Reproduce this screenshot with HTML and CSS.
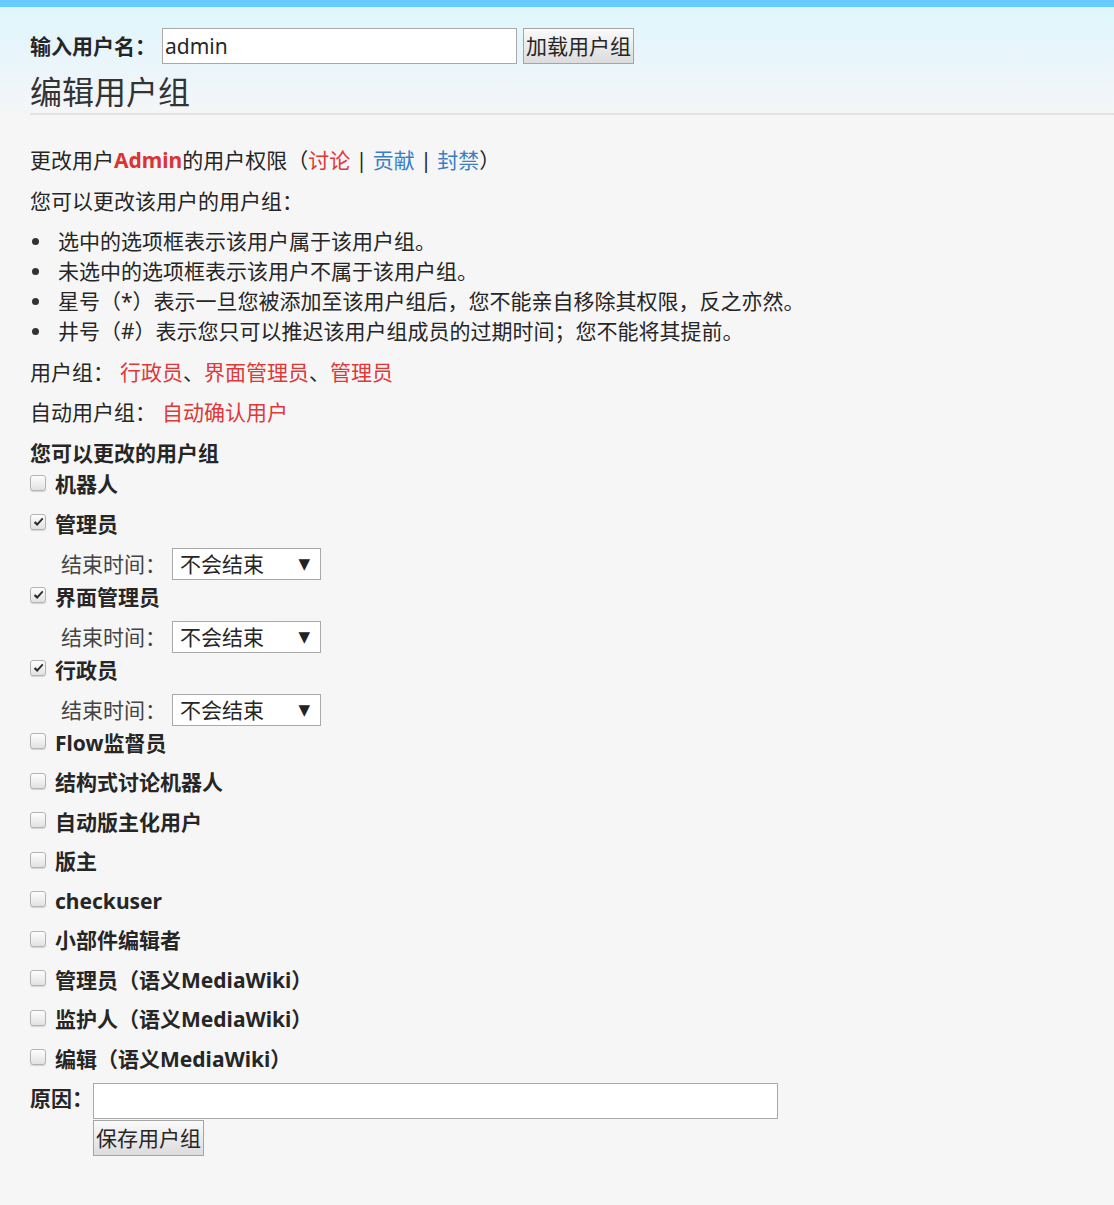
FILE: index.html
```html
<!DOCTYPE html>
<html lang="zh-CN">
<head>
<meta charset="utf-8">
<title>编辑用户组</title>
<link rel="stylesheet" href="styles.css">
</head>
<body>
<div class="topbar"></div>
<div class="page">
  <form class="loadform">
    <label class="loadlabel">输入用户名：</label>
    <input class="userbox" type="text" value="admin">
    <button type="button" class="btn load-btn">加载用户组</button>
  </form>
  <h1 class="title">编辑用户组</h1>

  <p class="rights">更改用户<b class="uname">Admin</b>的用户权限（<a class="red">讨论</a> | <a class="blue">贡献</a> | <a class="blue">封禁</a>）</p>
  <p class="can">您可以更改该用户的用户组：</p>
  <ul class="notes">
    <li>选中的选项框表示该用户属于该用户组。</li>
    <li>未选中的选项框表示该用户不属于该用户组。</li>
    <li>星号（*）表示一旦您被添加至该用户组后，您不能亲自移除其权限，反之亦然。</li>
    <li>井号（#）表示您只可以推迟该用户组成员的过期时间；您不能将其提前。</li>
  </ul>
  <p class="groups">用户组：<span class="gap"></span><a class="red">行政员</a>、<a class="red">界面管理员</a>、<a class="red">管理员</a></p>
  <p class="auto">自动用户组：<span class="gap"></span><a class="red">自动确认用户</a></p>
  <h3 class="changeable">您可以更改的用户组</h3>

  <div class="grouplist">
    <div class="row"><span class="cb"></span><span class="glabel">机器人</span></div>
    <div class="row"><span class="cb"><svg class="tick" viewBox="0 0 12 11" width="11" height="10"><path d="M0.8 6.2 L2.6 4.6 L4.6 6.6 L10 0.8 L11.4 2.2 L4.6 10 Z"/></svg></span><span class="glabel">管理员</span></div>
    <div class="expiry"><span class="elabel">结束时间：</span><span class="sel"><span>不会结束</span><span class="arrow">▼</span></span></div>
    <div class="row"><span class="cb"><svg class="tick" viewBox="0 0 12 11" width="11" height="10"><path d="M0.8 6.2 L2.6 4.6 L4.6 6.6 L10 0.8 L11.4 2.2 L4.6 10 Z"/></svg></span><span class="glabel">界面管理员</span></div>
    <div class="expiry"><span class="elabel">结束时间：</span><span class="sel"><span>不会结束</span><span class="arrow">▼</span></span></div>
    <div class="row"><span class="cb"><svg class="tick" viewBox="0 0 12 11" width="11" height="10"><path d="M0.8 6.2 L2.6 4.6 L4.6 6.6 L10 0.8 L11.4 2.2 L4.6 10 Z"/></svg></span><span class="glabel">行政员</span></div>
    <div class="expiry"><span class="elabel">结束时间：</span><span class="sel"><span>不会结束</span><span class="arrow">▼</span></span></div>
    <div class="row"><span class="cb"></span><span class="glabel">Flow监督员</span></div>
    <div class="row"><span class="cb"></span><span class="glabel">结构式讨论机器人</span></div>
    <div class="row"><span class="cb"></span><span class="glabel">自动版主化用户</span></div>
    <div class="row"><span class="cb"></span><span class="glabel">版主</span></div>
    <div class="row"><span class="cb"></span><span class="glabel">checkuser</span></div>
    <div class="row"><span class="cb"></span><span class="glabel">小部件编辑者</span></div>
    <div class="row"><span class="cb"></span><span class="glabel">管理员（语义MediaWiki）</span></div>
    <div class="row"><span class="cb"></span><span class="glabel">监护人（语义MediaWiki）</span></div>
    <div class="row"><span class="cb"></span><span class="glabel">编辑（语义MediaWiki）</span></div>
  </div>

  <div class="reason">
    <label class="rlabel">原因：</label>
    <div class="rfields">
      <input class="reasonbox" type="text">
      <button type="button" class="btn save-btn">保存用户组</button>
    </div>
  </div>
</div>
</body>
</html>
```

FILE: styles.css
```css
html, body {
  margin: 0;
  padding: 0;
}
body {
  background: #f6f6f6;
  font-family: "Noto Sans", "Noto Sans CJK SC", sans-serif;
  font-size: 21px;
  color: #262626;
  line-height: 30px;
}
.topbar {
  height: 7px;
  background: #66ccff;
}
.page {
  padding: 21px 0 40px 30px;
  background: linear-gradient(to bottom, #def7fb 0px, #e9f5fb 50px, #f6f6f6 112px, #f6f6f6 100%);
}
.loadform {
  display: flex;
  align-items: center;
  height: 36px;
  margin: 0;
}
.loadlabel {
  font-weight: bold;
  width: 132px;
}
.userbox {
  width: 355px;
  height: 36px;
  box-sizing: border-box;
  border: 1px solid #a9a9a9;
  background: #fff;
  font-family: inherit;
  font-size: 21px;
  color: #262626;
  padding: 0 2px;
  outline: none;
}
.btn {
  height: 36px;
  box-sizing: border-box;
  border: 1px solid #a5a5a5;
  background: linear-gradient(to bottom, #fafafa, #dcdcdc);
  font-family: inherit;
  font-size: 21px;
  color: #262626;
  padding: 0 1px;
  line-height: 30px;
  white-space: nowrap;
}
.load-btn {
  margin-left: 6px;
  width: 111px;
}
.title {
  margin: 0;
  padding-top: 8px;
  font-size: 32px;
  line-height: 40px;
  font-weight: normal;
  color: #333;
  border-bottom: 2px solid #e2e2e2;
  height: 41px;
}
p {
  margin: 0;
  line-height: 30px;
}
.rights {
  margin-top: 30px;
}
.uname {
  color: #dd3333;
  font-weight: bold;
}
a.red {
  color: #e03838;
}
a.blue {
  color: #3a7fc6;
}
.can {
  margin-top: 11px;
}
.notes {
  list-style: none;
  margin: 10px 0 0;
  padding: 0;
}
.notes li {
  display: flex;
  align-items: center;
  line-height: 30px;
}
.notes li::before {
  content: "";
  width: 7px;
  height: 7px;
  border-radius: 50%;
  background: #333;
  margin: 0 19px 0 2px;
  flex: none;
}
.groups {
  margin-top: 11px;
}
.auto {
  margin-top: 10px;
}
.gap {
  display: inline-block;
  width: 6px;
}
.changeable {
  margin: 11px 0 0;
  font-size: 21px;
  line-height: 30px;
  font-weight: bold;
}
.grouplist {
  margin-top: 1px;
}
.row {
  display: flex;
  align-items: center;
  height: 30px;
  margin-bottom: 9.5px;
}
.cb {
  width: 16px;
  height: 16px;
  box-sizing: border-box;
  border: 1px solid #b4b4b4;
  border-radius: 3px;
  background: linear-gradient(to bottom, #fdfdfd, #e2e2e2);
  box-shadow: 0 1px 1px rgba(0,0,0,0.15);
  margin: 0 9px 3px 0;
  display: flex;
  align-items: center;
  justify-content: center;
  flex: none;
}
.tick {
  display: block;
  fill: #2a2a2a;
}
.glabel {
  font-weight: bold;
}
.expiry {
  display: flex;
  align-items: center;
  height: 32px;
  margin-bottom: 1.5px;
  padding-left: 31px;
}
.elabel {
  width: 111px;
  color: #444;
}
.sel {
  width: 149px;
  height: 32px;
  box-sizing: border-box;
  border: 1px solid #a9a9a9;
  background: #fff;
  display: flex;
  align-items: center;
  justify-content: space-between;
  padding: 0 10px 0 7px;
}
.arrow {
  font-family: "DejaVu Sans", sans-serif;
  font-size: 15px;
  color: #222;
}
.reason {
  display: flex;
  align-items: flex-start;
}
.rlabel {
  width: 63px;
  font-weight: bold;
  line-height: 30px;
}
.rfields {
  display: flex;
  flex-direction: column;
  align-items: flex-start;
}
.reasonbox {
  width: 685px;
  height: 36px;
  box-sizing: border-box;
  border: 1px solid #a9a9a9;
  background: #fff;
  font-family: inherit;
  font-size: 21px;
  outline: none;
}
.save-btn {
  margin-top: 1px;
  width: 111px;
}
```
